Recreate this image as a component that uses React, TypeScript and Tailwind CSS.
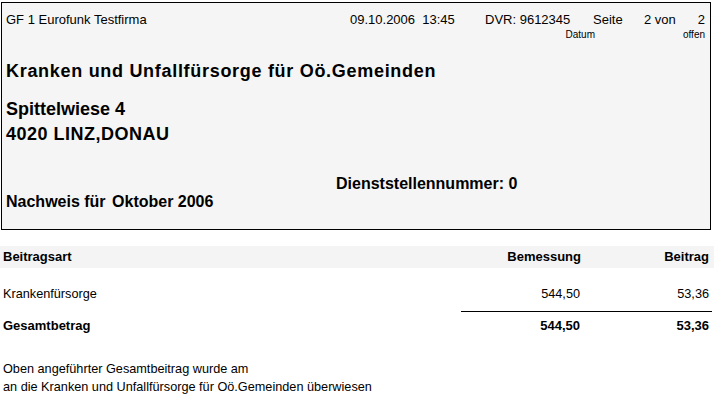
export default function App() {
  return (
    <div className="w-[716px] h-[397px] bg-white text-black font-['Liberation_Sans',Arial,sans-serif] overflow-hidden">
      <div className="ml-[1px] mt-[2px] w-[710px] h-[228px] border border-black bg-[#f5f5f5] px-[4px] flex flex-col">
        <div className="flex text-[13px] leading-[14px] mt-[10px]">
          <span className="w-[344px]">GF 1 Eurofunk Testfirma</span>
          <span className="w-[135px] whitespace-pre">09.10.2006  13:45</span>
          <span className="w-[108px]">DVR: 9612345</span>
          <span className="w-[51px]">Seite</span>
          <span>2 von</span>
          <span className="ml-auto mr-[1px]">2</span>
        </div>
        <div className="flex text-[10px] leading-[12px] mt-[2px]">
          <span className="w-[589px] text-right">Datum</span>
          <span className="ml-auto mr-[1px]">offen</span>
        </div>
        <div className="mt-[20px] text-[18px] leading-[20px] font-bold tracking-[0.7px]">
          Kranken und Unfallfürsorge für Oö.Gemeinden
        </div>
        <div className="mt-[18px] text-[18px] leading-[20px] font-bold">Spittelwiese 4</div>
        <div className="mt-[5px] text-[18px] leading-[20px] font-bold tracking-[0.5px]">4020 LINZ,DONAU</div>
        <div className="mt-[31px] pl-[330px] text-[16px] leading-[18px] font-bold">
          Dienststellennummer: 0
        </div>
        <div className="text-[16px] leading-[18px] font-bold">
          Nachweis für <span className="ml-[2px]">Oktober 2006</span>
        </div>
      </div>

      <div className="mt-[16px] w-[714px] h-[22px] bg-[#f4f4f4] flex items-center text-[13px] font-bold">
        <span className="pl-[3px] flex-1">Beitragsart</span>
        <span className="w-[120px] text-right">Bemessung</span>
        <span className="w-[133px] text-right pr-[5px]">Beitrag</span>
      </div>
      <div className="mt-[19px] w-[714px] h-[16px] flex items-center text-[12.7px]">
        <span className="pl-[3px] flex-1">Krankenfürsorge</span>
        <span className="w-[120px] text-right pr-[1px]">544,50</span>
        <span className="w-[133px] text-right pr-[5px]">53,36</span>
      </div>
      <div className="mt-[8px] ml-[461px] w-[251px] h-px bg-black" />
      <div className="mt-[6px] w-[714px] h-[16px] flex items-center text-[13px] font-bold">
        <span className="pl-[3px] flex-1">Gesamtbetrag</span>
        <span className="w-[120px] text-right pr-[1px]">544,50</span>
        <span className="w-[133px] text-right pr-[5px]">53,36</span>
      </div>
      <div className="mt-[26px] pl-[3px] text-[12.7px] leading-[18px]">
        <div>Oben angeführter Gesamtbeitrag wurde am</div>
        <div>an die Kranken und Unfallfürsorge für Oö.Gemeinden überwiesen</div>
      </div>
    </div>
  )
}
